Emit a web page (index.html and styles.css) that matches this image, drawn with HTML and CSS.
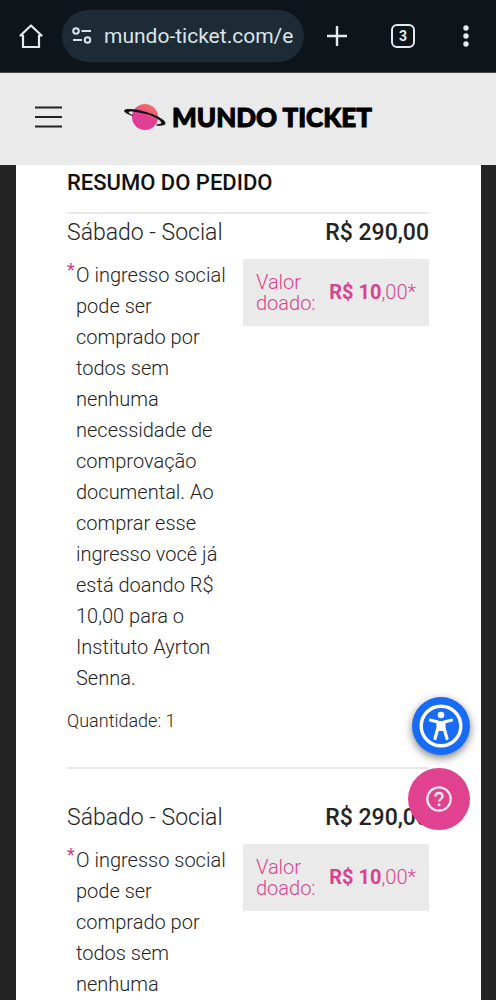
FILE: index.html
```html
<!DOCTYPE html>
<html lang="pt-BR">
<head>
<meta charset="utf-8">
<meta name="viewport" content="width=device-width, initial-scale=1">
<title>Mundo Ticket</title>
<link rel="stylesheet" href="styles.css">
</head>
<body>
<div class="browser-bar">
  <button class="bar-button home-button" type="button" aria-label="Início">
    <svg width="24" height="24" viewBox="0 0 24 24" fill="none" stroke="#e3eaf0" stroke-width="2.200" stroke-linejoin="round" stroke-linecap="round"><path d="M1.500 11.500 12 1.500l10.500 10H20V23H4V11.500Z"/></svg>
  </button>
  <div class="address">
    <svg width="20" height="18" viewBox="0 0 20 18" fill="none" stroke="#dbe4ea" stroke-width="2"><circle cx="4" cy="4" r="2.800"/><path d="M9.500 4H19M1 13h9"/><circle cx="15.500" cy="13" r="2.800"/></svg>
    <input class="address-input" type="text" aria-label="Endereço" value="mundo-ticket.com/e">
  </div>
  <button class="bar-button" type="button" aria-label="Nova guia">
    <svg width="22" height="22" viewBox="0 0 22 22" fill="none" stroke="#e3eaf0" stroke-width="2.400"><path d="M11 1v20M1 11h20"/></svg>
  </button>
  <button class="bar-button" type="button" aria-label="Guias abertas"><span class="tab-count">3</span></button>
  <button class="bar-button more-button" type="button" aria-label="Mais opções">
    <svg width="6" height="22" viewBox="0 0 6 22" fill="#e3eaf0"><circle cx="3" cy="3" r="2.700"/><circle cx="3" cy="11" r="2.700"/><circle cx="3" cy="19" r="2.700"/></svg>
  </button>
</div>
<header class="site-header">
  <button class="menu-button" type="button" aria-label="Menu">
    <svg width="28" height="22" viewBox="0 0 28 22" stroke="#222" stroke-width="2"><path d="M1 1.500h27M1 11h27M1 20.500h27"/></svg>
  </button>
  <a class="brand" href="#">
    <svg width="42" height="28" viewBox="0 0 42 28">
      <defs><linearGradient id="planet" x1=".85" y1=".1" x2=".5" y2=".8"><stop offset="0" stop-color="#f47068"/><stop offset=".4" stop-color="#ee5878"/><stop offset=".6" stop-color="#df4095"/></linearGradient></defs>
      <circle cx="21" cy="14" r="13" fill="url(#planet)"/>
      <path d="M8.500 13C2 11 -1 8.500 .5 7 3 5 14 6.500 25 10c11 3.500 17 8 16.500 10.500-.5 2-4 2.500-9.500 2l1-1.300c3 .2 5-.4 4-2.200-1.500-2.500-7-5.500-14-7.700C14 9 7 7.800 5 8.700c-1.200.7 1 2.300 4 3.300Z" fill="#111"/>
    </svg>
    <span class="brand-name">MUNDO TICKET</span>
  </a>
</header>
<main class="page">
  <section class="summary">
    <h1 class="summary-title">RESUMO DO PEDIDO</h1>
    <article class="item">
      <div class="item-head"><h2 class="item-name">Sábado - Social</h2><strong class="item-price">R$ 290,00</strong></div>
      <div class="item-body">
        <span class="mark">*</span>
        <p class="item-text">O ingresso social pode ser comprado por todos sem nenhuma necessidade de comprovação documental. Ao comprar esse ingresso você já está doando R$ 10,00 para o Instituto Ayrton Senna.</p>
        <div class="donation"><span class="donation-label">Valor doado:</span><span class="donation-value"><b>R$ 10</b>,00*</span></div>
      </div>
      <p class="quantity">Quantidade: 1</p>
    </article>
    <article class="item">
      <div class="item-head"><h2 class="item-name">Sábado - Social</h2><strong class="item-price">R$ 290,00</strong></div>
      <div class="item-body">
        <span class="mark">*</span>
        <p class="item-text">O ingresso social pode ser comprado por todos sem nenhuma</p>
        <div class="donation"><span class="donation-label">Valor doado:</span><span class="donation-value"><b>R$ 10</b>,00*</span></div>
      </div>
    </article>
  </section>
</main>
<div class="floating">
  <button class="fab fab-access" type="button" aria-label="Acessibilidade">
    <svg width="44" height="44" viewBox="0 0 44 44"><circle cx="22" cy="22" r="19.800" fill="none" stroke="#fff" stroke-width="3.400"/><circle cx="22" cy="11" r="3.300" fill="#fff"/><path d="M11.500 16.200 19 18v6l-3 10.500M32.500 16.200 25 18v6l3 10.500" fill="none" stroke="#fff" stroke-width="3.200" stroke-linecap="round" stroke-linejoin="round"/><path d="M18 17h8v8l-2 2h-4l-2-2Z" fill="#fff"/></svg>
  </button>
  <button class="fab fab-help" type="button" aria-label="Ajuda">
    <svg width="26" height="26" viewBox="0 0 26 26" fill="none" stroke="#fce6f1" stroke-width="2.300"><circle cx="13" cy="13" r="11.700"/><path d="M9.400 10.500c0-2.200 1.600-3.500 3.600-3.500s3.600 1.200 3.600 3.200c0 2.600-3.500 2.800-3.500 5.300"/><circle cx="13" cy="18.700" r="1.500" fill="#fce6f1" stroke="none"/></svg>
  </button>
</div>
</body>
</html>
```
FILE: styles.css
```css
* { box-sizing: border-box; }
body {
  margin: 0;
  height: 100vh;
  overflow: hidden;
  display: flex;
  flex-direction: column;
  background: #242424;
  color: #242424;
  font-family: Roboto, "Liberation Sans", sans-serif;
}
h1, h2, p { margin: 0; }
button { border: 0; padding: 0; background: none; display: flex; align-items: center; justify-content: center; }
svg { display: block; flex: none; }

.browser-bar {
  flex: none;
  display: flex;
  align-items: center;
  height: 73px;
  background: #0d141a;
  border-bottom: 1px solid #444a4e;
}
.bar-button { flex: none; width: 66px; height: 52px; }
.home-button { width: 62px; }
.more-button { width: 60px; }
.address {
  flex: 1;
  min-width: 0;
  display: flex;
  align-items: center;
  gap: 12px;
  height: 52px;
  padding: 0 10px;
  border-radius: 26px;
  background: #1c2b35;
}
.address-input {
  flex: 1;
  min-width: 0;
  border: 0;
  padding: 0;
  background: none;
  color: #dbe4ea;
  font: 400 21px/28px Roboto, sans-serif;
}
.tab-count {
  width: 24px;
  height: 24px;
  border: 2px solid #e3eaf0;
  border-radius: 6px;
  color: #e3eaf0;
  font: 700 14px/20px Roboto, sans-serif;
  text-align: center;
}

.site-header {
  flex: none;
  display: flex;
  align-items: center;
  height: 92px;
  padding: 0 34px 4px;
  background: #eaeaea;
}
.menu-button { width: 28px; height: 44px; }
.brand {
  flex: 1;
  display: flex;
  align-items: center;
  justify-content: center;
  gap: 6px;
  margin-right: 28px;
  color: #000;
  text-decoration: none;
}
.brand-name { font: 900 26px/32px Lato, sans-serif; -webkit-text-stroke: 1px #000; white-space: nowrap; }

.page { flex: 1; min-height: 0; padding: 0 15px 0 16px; }
.summary { min-height: 100%; padding: 0 52px 0 51px; background: #fff; }
.summary-title {
  height: 49px;
  padding-top: 3px;
  border-bottom: 2px solid #e8e8e8;
  color: #111;
  font-size: 22px;
  font-weight: 500;
  line-height: 30px;
}
.item { padding-top: 4px; }
.item + .item { padding-top: 34px; border-top: 2px solid #e8e8e8; }
.item-head { display: flex; justify-content: space-between; line-height: 30px; }
.item-name { font-size: 23px; font-weight: 300; }
.item-price { font-size: 23px; font-weight: 500; }
.item-body { display: flex; align-items: flex-start; padding-top: 11px; }
.mark { flex: none; width: 9px; color: #c8428a; font-size: 18px; line-height: 22px; }
.item-text { flex: 1; min-width: 0; padding-top: 1px; font-size: 20px; font-weight: 300; line-height: 31px; }
.donation {
  flex: none;
  display: flex;
  align-items: center;
  justify-content: space-between;
  width: 186px;
  height: 67px;
  margin-left: 14px;
  padding: 0 13px;
  background: #eaeaea;
  color: #d9438d;
  font-size: 20px;
  font-weight: 300;
  line-height: 21px;
}
.donation-label { width: 66px; }
.donation-value { white-space: nowrap; }
.donation b { font-weight: 700; }
.quantity { padding: 12px 0 31px; font-size: 18px; font-weight: 300; line-height: 30px; }

.floating {
  position: fixed;
  right: 26px;
  bottom: 170px;
  display: flex;
  flex-direction: column;
  align-items: flex-end;
  gap: 13px;
}
.fab { border-radius: 50%; }
.fab-access { width: 58px; height: 58px; background: #176bf5; box-shadow: 0 3px 9px rgba(0, 0, 0, .5); }
.fab-help { width: 62px; height: 62px; background: #e0428f; }
```
